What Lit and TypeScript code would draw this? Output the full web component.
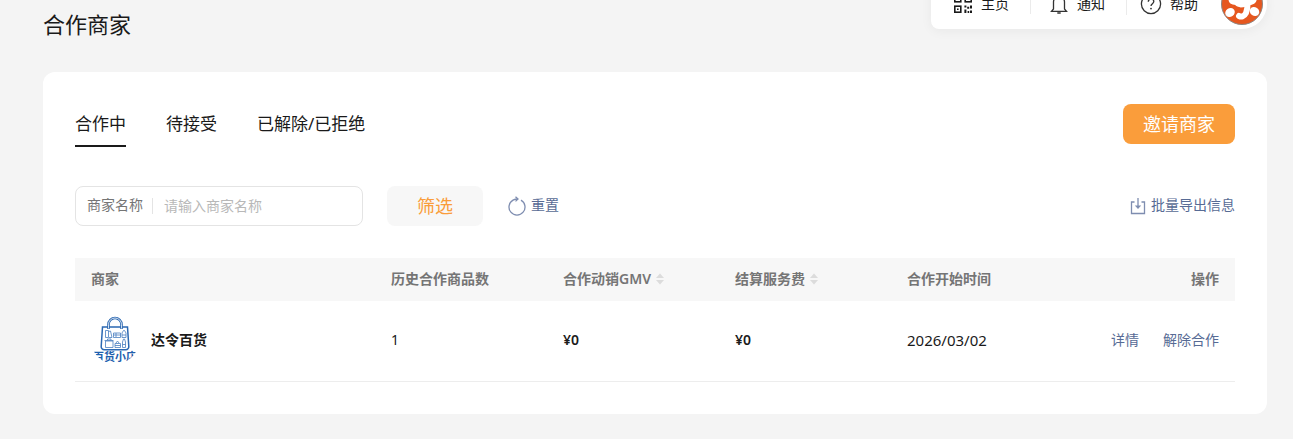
import { LitElement, html, css, svg } from "lit";
import { customElement, property, state } from "lit/decorators.js";
import { classMap } from "lit/directives/class-map.js";

interface Merchant {
  name: string;
  products: number;
  gmv: string;
  fee: string;
  since: string;
}

@customElement("top-bar")
export class TopBar extends LitElement {
  static styles = css`
    :host {
      display: block;
    }
    .bar {
      display: flex;
      align-items: center;
      height: 50px;
      padding: 0 3px 0 22px;
      background: #fff;
      border-radius: 8px 25px 25px 8px;
      box-shadow: 0 2px 12px rgba(0, 0, 0, 0.05);
    }
    .item {
      display: flex;
      align-items: center;
      gap: 8px;
      color: #1a1a1a;
      font-size: 14px;
      line-height: 20px;
      text-decoration: none;
    }
    .item + .item {
      margin-left: 21px;
      padding-left: 18px;
      border-left: 1px solid #ebebeb;
    }
    .item + .item + .item {
      padding-left: 13px;
    }
    .avatar {
      margin-left: 22px;
      width: 44px;
      height: 44px;
      padding: 0;
      border: 0;
      background: none;
    }
    svg {
      display: block;
    }
  `;

  render() {
    return html`<nav class="bar" aria-label="快捷导航">
      <a class="item" href="#home">
        <svg width="20" height="20" viewBox="0 0 20 20" fill="none" stroke="#1a1a1a" stroke-width="1.6" aria-hidden="true">
          <rect x="1.8" y="1.8" width="6" height="6" />
          <rect x="12.2" y="1.8" width="6" height="6" />
          <rect x="1.8" y="12.2" width="6" height="6" />
          <path fill="#1a1a1a" stroke="none" d="M11.4 11.4h2v2h-2zM14.2 12.8h2v2h-2zM17 11.4h2v3h-2zM11.4 15.4h2v3.6h-2zM14.6 17h1.6v2h-1.6zM17 16.4h2V19h-2zM4 4h1.6v1.6H4zM14.4 4H16v1.6h-1.6zM4 14.4h1.6V16H4z" />
        </svg>
        <span>主页</span>
      </a>
      <a class="item" href="#notice">
        <svg width="20" height="20" viewBox="0 0 20 20" fill="none" stroke="#333" stroke-width="1.3" aria-hidden="true">
          <path d="M10 1v1.6M4.5 15V8a5.5 5.5 0 0 1 11 0v7L17.500 17.400h-15zM8.300 19h3.400" />
        </svg>
        <span>通知</span>
      </a>
      <a class="item" href="#help">
        <svg width="22" height="22" viewBox="0 0 22 22" fill="none" stroke="#333" stroke-width="1.3" aria-hidden="true">
          <circle cx="11" cy="11" r="9.6" />
          <path d="M8.3 8.8c0-3.6 5.5-3.4 5.5-.2 0 2.1-2.8 2.2-2.8 4.4" />
          <circle cx="11" cy="15.6" r=".9" fill="#333" stroke="none" />
        </svg>
        <span>帮助</span>
      </a>
      <button class="avatar" aria-label="账户">
        <svg width="44" height="44" viewBox="0 0 44 44" aria-hidden="true">
          <circle cx="22" cy="22" r="20.500" fill="#e6571f" stroke="#8f8580" />
          <g fill="none" stroke="#fff" stroke-linecap="round" stroke-linejoin="round">
            <path stroke-width="5" d="M30 7c-7 3-12 3-18 4-1 5-2 8 1 9 5 1 10-1 13-4" />
            <path stroke-width="6" d="M27 14c1 7 1 12-1 17-2 4-5 4-7 3" />
            <path stroke-width="5" d="M16 20c2 4 6 3 10 2M34 16c1 3-2 5-7 5" />
          </g>
          <ellipse cx="10" cy="30.500" rx="5" ry="4.300" fill="#fff" transform="rotate(-35 10 30.500)" />
          <ellipse cx="34.500" cy="29.500" rx="5" ry="4.300" fill="#fff" transform="rotate(35 34.500 29.500)" />
        </svg>
      </button>
    </nav>`;
  }
}

@customElement("shop-logo")
export class ShopLogo extends LitElement {
  static styles = css`
    :host {
      display: block;
      width: 48px;
      height: 48px;
      border-radius: 50%;
      overflow: hidden;
    }
    svg {
      display: block;
    }
    .word {
      font: 700 11px "Noto Sans CJK SC", sans-serif;
      fill: #1f5fae;
    }
  `;

  render() {
    return html`<svg width="48" height="48" viewBox="0 0 48 48" fill="none" stroke="#2b68b2" aria-hidden="true">
      <path stroke-width="1.5" d="M11.500 11h25l1.300 19.500a3 3 0 0 1-3 3.200H13.200a3 3 0 0 1-3-3.200z" />
      <path stroke-width="2.600" d="M17.500 13V8.500a6.500 6.500 0 0 1 13 0V13" />
      <path stroke="#fff" stroke-width=".8" d="M17.500 12.500v-4a6.500 6.500 0 0 1 13 0v4" />
      <path
        stroke-width=".8"
        stroke="#4a7fc0"
        d="M14.500 14.500h3v7h-3zM17.500 15.500l2-.5 1.500 6.500h-3M22.500 17h7v4.500h-7zM22.500 19h7M25 17v4M31 17l1.500-2.500h1L35 17v4.500h-4zM31 19h4M13.500 24.500h9M14.500 25h7.500v6.500h-7.500zM16.500 24v-1h3.500v1M24 27.500h5.500v4H24zM24 29.500h5.500M25 27l1.500-2 1.500 2M31.500 26l1-3h1l1 3v5.500h-3zM31.500 28.500h3"
      />
      <text class="word" x="24" y="45" text-anchor="middle" stroke="none">百货小店</text>
    </svg>`;
  }
}

@customElement("app-root")
export class AppRoot extends LitElement {
  static styles = css`
    :host {
      display: block;
      position: relative;
      min-height: 100vh;
      overflow: hidden;
      box-sizing: border-box;
      padding: 8px 26px 25px 43px;
      background: #f4f4f4;
      color: #1a1a1a;
      font-family: "Noto Sans", "Noto Sans CJK SC", sans-serif;
      font-size: 14px;
      line-height: 20px;
    }
    * {
      box-sizing: border-box;
    }
    button,
    input {
      font: inherit;
    }
    button {
      cursor: pointer;
    }
    svg {
      display: block;
    }
    .top {
      position: absolute;
      top: -21px;
      right: 26px;
    }
    h1 {
      margin: 0 0 32px;
      font-size: 22px;
      line-height: 32px;
      font-weight: 400;
    }
    .card {
      padding: 32px;
      border-radius: 12px;
      background: #fff;
    }
    .head,
    .filters {
      display: flex;
      align-items: center;
      justify-content: space-between;
    }
    .head {
      align-items: flex-start;
    }
    .tabs {
      display: flex;
      gap: 40px;
    }
    .tab {
      padding: 8px 0 9px;
      border: 0;
      border-bottom: 2px solid transparent;
      background: none;
      color: #1a1a1a;
      font-size: 17px;
      line-height: 24px;
    }
    .tab.active {
      border-color: #1a1a1a;
    }
    .invite,
    .filter {
      height: 40px;
      border: 0;
      border-radius: 8px;
      font-size: 18px;
      line-height: 24px;
    }
    .invite {
      padding: 0 20px;
      background: #fa9d3b;
      color: #fff;
    }
    .filter {
      width: 96px;
      margin: 0 25px 0 24px;
      background: #f7f7f7;
      color: #fa9d3b;
    }
    .filters {
      margin: 39px 0 32px;
    }
    .group {
      display: flex;
      align-items: center;
    }
    .field {
      display: flex;
      align-items: center;
      width: 288px;
      height: 40px;
      padding: 0 11px;
      border: 1px solid #e4e4e4;
      border-radius: 8px;
      color: #757575;
    }
    .field label {
      padding: 0 9px 2px 0;
    }
    .field input {
      flex: 1;
      min-width: 0;
      height: 20px;
      padding: 0 0 0 11px;
      border: 0;
      outline: 0;
      background: none;
      color: #1a1a1a;
    }
    .rule {
      width: 1px;
      height: 16px;
      background: #e4e4e4;
    }
    .field input::placeholder {
      color: #b8b8b8;
      opacity: 1;
    }
    .action {
      display: flex;
      align-items: center;
      gap: 5px;
      padding: 0;
      border: 0;
      background: none;
      color: #576b95;
    }
    .action span {
      padding-bottom: 2px;
    }
    table {
      width: 100%;
      border-collapse: separate;
      border-spacing: 0;
      table-layout: fixed;
    }
    .merchant {
      width: 300px;
    }
    .data {
      width: 172px;
    }
    th,
    td {
      padding: 0 16px 2px;
      text-align: left;
    }
    th {
      height: 43px;
      background: #f7f7f7;
      color: #757575;
      font-weight: 600;
    }
    td {
      height: 81px;
      border-bottom: 1px solid #ededed;
    }
    .strong {
      font-weight: 600;
    }
    .date {
      font-size: 15px;
    }
    .last {
      text-align: right;
    }
    .shop {
      display: flex;
      align-items: center;
      gap: 12px;
    }
    .sort {
      display: flex;
      align-items: center;
      gap: 5px;
      padding: 0;
      border: 0;
      background: none;
      color: inherit;
    }
    .links {
      display: flex;
      justify-content: flex-end;
      gap: 24px;
    }
    .links a {
      color: #576b95;
      text-decoration: none;
    }
  `;

  @property({ attribute: false }) tabs = ["合作中", "待接受", "已解除/已拒绝"];
  @state() private active = 0;
  @state() private keyword = "";

  private merchants: Merchant[] = [
    { name: "达令百货", products: 1, gmv: "¥0", fee: "¥0", since: "2026/03/02" },
  ];

  private sortButton(label: string) {
    return html`<button class="sort">
      ${label}
      <svg width="8" height="12" viewBox="0 0 8 12" fill="#dcdcdc" aria-hidden="true">
        ${svg`<path d="M4 .5 8 5H0zM0 7h8l-4 4.500z" />`}
      </svg>
    </button>`;
  }

  render() {
    return html`
      <top-bar class="top"></top-bar>
      <h1>合作商家</h1>
      <main class="card">
        <div class="head">
          <div class="tabs" role="tablist">
            ${this.tabs.map(
              (t, i) => html`<button
                role="tab"
                aria-selected=${i === this.active ? "true" : "false"}
                class=${classMap({ tab: true, active: i === this.active })}
                @click=${() => (this.active = i)}
              >${t}</button>`
            )}
          </div>
          <button class="invite">邀请商家</button>
        </div>
        <div class="filters">
          <div class="group">
            <div class="field">
              <label for="name">商家名称</label>
              <span class="rule"></span>
              <input
                id="name"
                placeholder="请输入商家名称"
                .value=${this.keyword}
                @input=${(e: Event) => (this.keyword = (e.target as HTMLInputElement).value)}
              />
            </div>
            <button class="filter">筛选</button>
            <button class="action" @click=${() => (this.keyword = "")}>
              <svg width="18" height="20" viewBox="0 0 18 20" fill="none" stroke="#7e8db0" stroke-width="1.3" aria-hidden="true">
                <path d="M13 4.100A8 8 0 1 1 5 4.100Q7 3 10 3" />
                <path d="M7.500.8 10 3 7.500 5.400" />
              </svg>
              <span>重置</span>
            </button>
          </div>
          <button class="action">
            <svg width="16" height="18" viewBox="0 0 16 18" fill="none" stroke="#7e8db0" stroke-width="1.3" aria-hidden="true">
              <path d="M4.500 5H1.500v11.500h13V5h-3M8 1v9" />
              <path fill="#7e8db0" stroke="none" d="M4.800 8.500h6.400L8 12z" />
            </svg>
            <span>批量导出信息</span>
          </button>
        </div>
        <table>
          <thead>
            <tr>
              <th class="merchant">商家</th>
              <th class="data">历史合作商品数</th>
              <th class="data">${this.sortButton("合作动销GMV")}</th>
              <th class="data">${this.sortButton("结算服务费")}</th>
              <th class="data">合作开始时间</th>
              <th class="last">操作</th>
            </tr>
          </thead>
          <tbody>
            ${this.merchants.map(
              (m) => html`<tr>
                <td>
                  <div class="shop"><shop-logo></shop-logo><span class="strong">${m.name}</span></div>
                </td>
                <td>${m.products}</td>
                <td class="strong">${m.gmv}</td>
                <td class="strong">${m.fee}</td>
                <td class="date">${m.since}</td>
                <td>
                  <div class="links"><a href="#detail">详情</a><a href="#remove">解除合作</a></div>
                </td>
              </tr>`
            )}
          </tbody>
        </table>
      </main>
    `;
  }
}
